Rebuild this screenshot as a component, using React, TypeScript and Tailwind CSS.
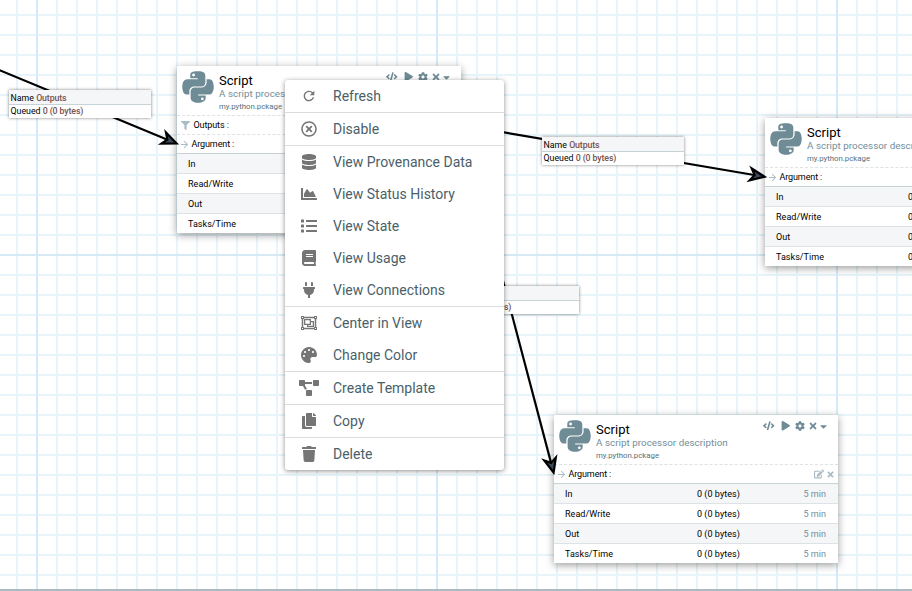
import type { ReactNode } from "react";
import {
  FaPython, FaCode, FaPlay, FaCog, FaTimes, FaCaretDown, FaFilter, FaEdit, FaRegTimesCircle,
  FaDatabase, FaChartArea, FaList, FaBook, FaPlug, FaRegObjectGroup, FaPalette, FaProjectDiagram,
  FaCopy, FaTrash,
} from "react-icons/fa";
import { MdRefresh, MdArrowForward } from "react-icons/md";

const stats = ["In", "Read/Write", "Out", "Tasks/Time"];

function Grid() {
  return (
    <svg className="absolute inset-0" width="912" height="591">
      <defs>
        <pattern id="minor" width="20" height="20" patternUnits="userSpaceOnUse" x="16" y="14">
          <rect width="2" height="20" fill="#e7f4f9" />
          <rect width="20" height="2" fill="#e7f4f9" />
        </pattern>
      </defs>
      <rect width="912" height="591" fill="url(#minor)" />
      <g fill="#d6eaf5">
        <rect x="36" width="2" height="591" />
        <rect x="436" width="2" height="591" />
        <rect x="836" width="2" height="591" />
        <rect y="254" width="912" height="2" />
      </g>
    </svg>
  );
}

function Arrow({ x1, y1, x2, y2 }: { x1: number; y1: number; x2: number; y2: number }) {
  const angle = (Math.atan2(y2 - y1, x2 - x1) * 180) / Math.PI;
  const len = Math.hypot(x2 - x1, y2 - y1);
  return (
    <g transform={`translate(${x2} ${y2}) rotate(${angle})`}>
      <path d={`M${-len} 0H-12`} stroke="#000" strokeWidth="2.2" />
      <path d="M-1.5 0L-15.5 -6L-11.5 0L-15.5 6Z" fill="#3b4a5c" stroke="#000" strokeWidth="2.2" />
    </g>
  );
}

function QueueLabel({ className }: { className: string }) {
  return (
    <div className={`absolute h-[28px] w-[142px] bg-white text-[8.8px] text-black shadow-[0_0_3px_rgba(0,0,0,0.5)] ${className}`}>
      <div className="h-[15px] border-b border-[#c7d2d7] bg-[#f4f6f7] pl-[2px] leading-[17px]">
        Name <span className="font-medium tracking-[-0.12px] text-[#775351]">Outputs</span>
      </div>
      <div className="pl-[2px] leading-[13px]">
        Queued <span className="font-medium tracking-[-0.12px] text-[#775351]">0 (0 bytes)</span>
      </div>
    </div>
  );
}

function Processor({ className, outputs = false }: { className: string; outputs?: boolean }) {
  return (
    <div className={`absolute w-[284px] bg-white text-[9px] tracking-[0.04px] text-black shadow-[0_2px_8px_rgba(0,0,0,0.4)] ${className}`}>
      <div className="flex h-[50px] border-b border-dashed border-[#dde2e4]">
        <FaPython className="ml-[3px] mt-[2.5px] size-[36px] shrink-0 text-[#6e8b96]" />
        <div className="ml-[3px] pt-[6px]">
          <div className="h-[16px] text-[13px] leading-[18px]">Script</div>
          <div className="h-[12px] whitespace-nowrap text-[9.8px] leading-[12px] text-[#728e9b]">A script processor description</div>
          <div className="text-[7.8px] leading-[14px] tracking-normal text-[#57707b]">my.python.pckage</div>
        </div>
        <div className="ml-auto mr-[9px] mt-[5px] flex h-[12px] items-center text-[#6e8b96]">
          <FaCode className="size-[11.5px]" />
          <FaPlay className="ml-[6.5px] size-[9.5px]" />
          <FaCog className="ml-[4.5px] size-[10px]" />
          <FaTimes className="ml-[3px] size-[10px]" />
          <FaCaretDown className="size-[11px]" />
        </div>
      </div>
      {outputs && (
        <div className="flex h-[19px] items-center border-b border-dashed border-[#dde2e4] pl-[4px]">
          <FaFilter className="size-[9px] text-[#abbcc4]" />
          <span className="ml-[3.5px] pt-[1px] tracking-[-0.1px]">Outputs :</span>
        </div>
      )}
      <div className="flex h-[19px] items-center border-b border-[#c7d2d7] pl-[2px] pr-[3px]">
        <MdArrowForward className="size-[11px] text-[#abbcc4]" />
        <span className="ml-[1.5px] flex-1 pt-[1px] tracking-[-0.12px]">Argument :</span>
        <FaEdit className="size-[10px] text-[#abbcc4]" />
        <FaTimes className="ml-[2px] size-[9px] text-[#abbcc4]" />
      </div>
      {stats.map((name, i) => (
        <div key={name} className={`flex items-center pl-[11px] pr-[12px] pt-[2px] ${i % 2 ? "bg-white" : "bg-[#f4f6f7]"} ${i < 3 ? "h-5 border-b border-[#dde2e4]" : "h-[19px]"}`}>
          <span className="w-[132px]">{name}</span>
          <span className="flex-1">0 (0 bytes)</span>
          <span className="text-[#728e9b]">5 min</span>
        </div>
      ))}
    </div>
  );
}

function Item({ icon, label, divider = false }: { icon: ReactNode; label: string; divider?: boolean }) {
  return (
    <div className={`flex items-center ${divider ? "h-[33px] border-b border-[#dcdcdc]" : "h-8"}`}>
      <span className="ml-[14px] flex w-5 justify-center text-base text-[#757575]">{icon}</span>
      <span className="ml-[14px] whitespace-nowrap text-[14px] leading-8 text-[#4a5f69]">{label}</span>
    </div>
  );
}

export default function App() {
  return (
    <div className="relative h-[591px] w-[912px] overflow-hidden bg-white font-['Roboto',sans-serif]">
      <Grid />
      <Processor className="left-[177px] top-[66px]" outputs />
      <Processor className="left-[765px] top-[118px]" />
      <Processor className="left-[554px] top-[415px]" />
      <svg className="absolute inset-0" width="912" height="591" fill="none">
        <Arrow x1={-2} y1={69.5} x2={178} y2={144} />
        <Arrow x1={461} y1={125} x2={766} y2={177} />
        <Arrow x1={502} y1={277} x2={554} y2={474} />
      </svg>
      <QueueLabel className="left-[8.5px] top-[89.5px]" />
      <QueueLabel className="left-[541.5px] top-[136.5px]" />
      <QueueLabel className="left-[436.5px] top-[285.5px]" />
      <div className="absolute left-[285px] top-[80px] h-[390px] w-[219px] rounded-[3px] bg-white shadow-[0_1px_5px_rgba(0,0,0,0.45)]">
        <Item icon={<MdRefresh />} label="Refresh" divider />
        <Item icon={<FaRegTimesCircle />} label="Disable" divider />
        <Item icon={<FaDatabase />} label="View Provenance Data" />
        <Item icon={<FaChartArea />} label="View Status History" />
        <Item icon={<FaList />} label="View State" />
        <Item icon={<FaBook />} label="View Usage" />
        <Item icon={<FaPlug />} label="View Connections" divider />
        <Item icon={<FaRegObjectGroup />} label="Center in View" />
        <Item icon={<FaPalette />} label="Change Color" divider />
        <Item icon={<FaProjectDiagram className="h-4 w-5" />} label="Create Template" divider />
        <Item icon={<FaCopy />} label="Copy" divider />
        <Item icon={<FaTrash />} label="Delete" />
      </div>
      <div className="absolute inset-x-0 bottom-0 h-[2px] bg-[#aabbc3]" />
    </div>
  );
}
